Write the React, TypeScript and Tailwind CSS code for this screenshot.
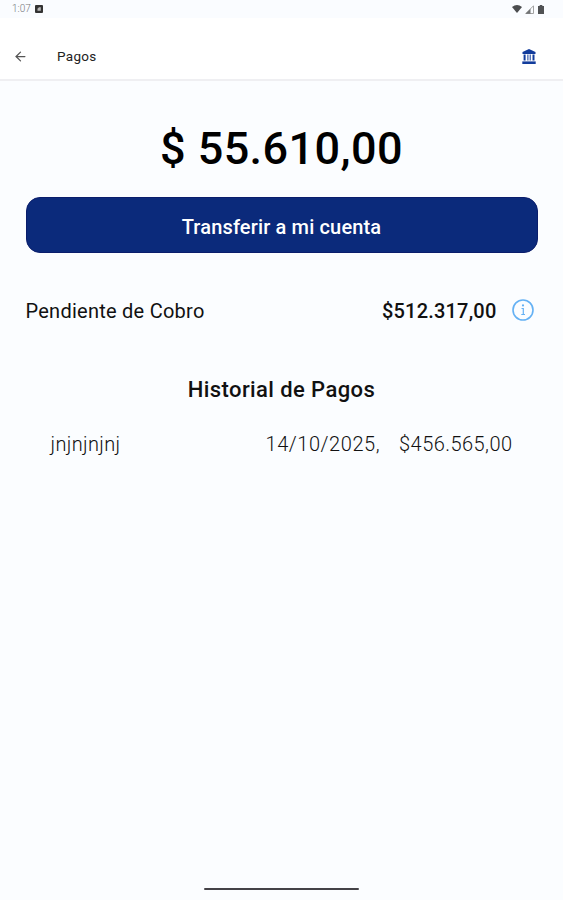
import { ArrowLeft } from 'lucide-react';

const payments = [{ id: 1, concept: 'jnjnjnjnj', date: '14/10/2025,', amount: '$456.565,00' }];

function StatusBar() {
    return (
        <div className="flex h-[18px] items-center justify-between bg-[#fafcff] pr-[19px] pl-3 text-[#77797c]">
            <div className="flex items-center gap-1">
                <span className="text-[10px] leading-none font-light">1:07</span>
                <svg viewBox="0 0 8 8" className="size-2">
                    <rect width="8" height="8" rx="1" fill="#333" />
                    <path d="M2.5 5.8V3.8L4 2.2H5.8V5.8Z" fill="#bbb" />
                </svg>
            </div>
            <div className="flex items-center gap-[3px]">
                <svg viewBox="0 0 10 8" className="h-2 w-2.5">
                    <path d="M0 2Q5-1.8 10 2L5 8Z" fill="#4b4d4f" />
                </svg>
                <svg viewBox="0 0 9 9" className="size-[9px]">
                    <path d="M.8 8.5L8.5.8V8.5Z" fill="none" stroke="#999" strokeWidth=".9" />
                    <path d="M.5 8.7L5.5 3.7V8.7Z" fill="#707274" />
                </svg>
                <svg viewBox="0 0 6 9" className="ml-[1px] h-[9px] w-1.5">
                    <path d="M0 1H1.7V0H4.3V1H6V9H0Z" fill="#505254" />
                </svg>
            </div>
        </div>
    );
}

function BankIcon() {
    return (
        <svg viewBox="0 0 14 15" className="mb-[2px] ml-auto h-[15px] w-[14px]" fill="#123c9c">
            <path d="M7 0L13.5 3V5H.5V3Z" />
            <path d="M1.6 5.4H3.6V11.4H1.6ZM5.4 5.4H6.4V11.4H5.4ZM7.7 5.4H8.7V11.4H7.7ZM10.5 5.4H12.5V11.4H10.5Z" />
            <path d="M.3 12.4H13.7V15H.3Z" />
        </svg>
    );
}

function Header() {
    return (
        <header className="flex h-[63px] items-center border-b-2 border-[#efeff2] bg-white pt-[17px] pr-[27px] pl-[13px]">
            <ArrowLeft className="mb-[2px] size-[15px] text-[#555]" strokeWidth={2} />
            <h1 className="ml-[29px] text-[13.5px] leading-none tracking-[0.3px] text-[#222]">Pagos</h1>
            <BankIcon />
        </header>
    );
}

function InfoIcon() {
    return (
        <svg viewBox="0 0 22 22" className="ml-[15px] size-[22px]" fill="none" stroke="#64b1f4">
            <circle cx="11" cy="11" r="10" strokeWidth="1.6" />
            <path d="M9.5 9.5H11.3V15.5M9.3 15.5H13" strokeWidth="1.2" />
            <circle cx="11" cy="6.4" r="1.1" fill="#64b1f4" stroke="none" />
        </svg>
    );
}

export default function App() {
    return (
        <div className="flex h-screen flex-col overflow-hidden bg-[#fbfdff] font-[Roboto,sans-serif] text-[#111]">
            <StatusBar />
            <Header />
            <main className="flex-1 px-[25.5px] pt-[42px]">
                <p className="text-center text-[45px] leading-[52px] font-medium tracking-[0.4px] text-black">
                    $ 55.610,00
                </p>
                <button className="mt-[22px] block h-[56px] w-full rounded-[14px] border border-[#0a1d6b] bg-[#0b2a7b] pt-[3px] text-[20px] font-medium tracking-[0.15px] text-white">
                    Transferir a mi cuenta
                </button>
                <div className="mt-[44px] flex h-7 items-center text-[20px]">
                    <span className="tracking-[0.25px]">Pendiente de Cobro</span>
                    <span className="ml-auto font-medium tracking-[0.2px]">$512.317,00</span>
                    <div className="mb-[2px] pr-[4px]">
                        <InfoIcon />
                    </div>
                </div>
                <h2 className="mt-[51px] text-center text-[22px] leading-[28px] font-medium tracking-[0.4px]">
                    Historial de Pagos
                </h2>
                <ul className="mt-[26px] px-[25px] text-[20px] leading-[28px] font-light">
                    {payments.map((payment) => (
                        <li key={payment.id} className="flex">
                            <span className="tracking-[0.35px]">{payment.concept}</span>
                            <span className="ml-auto tracking-[0.55px]">{payment.date}</span>
                            <span className="ml-[19px] tracking-[0.45px]">{payment.amount}</span>
                        </li>
                    ))}
                </ul>
            </main>
            <div className="mx-auto mb-[10px] h-[2px] w-[155px] rounded-full bg-[#444247]" />
        </div>
    );
}
